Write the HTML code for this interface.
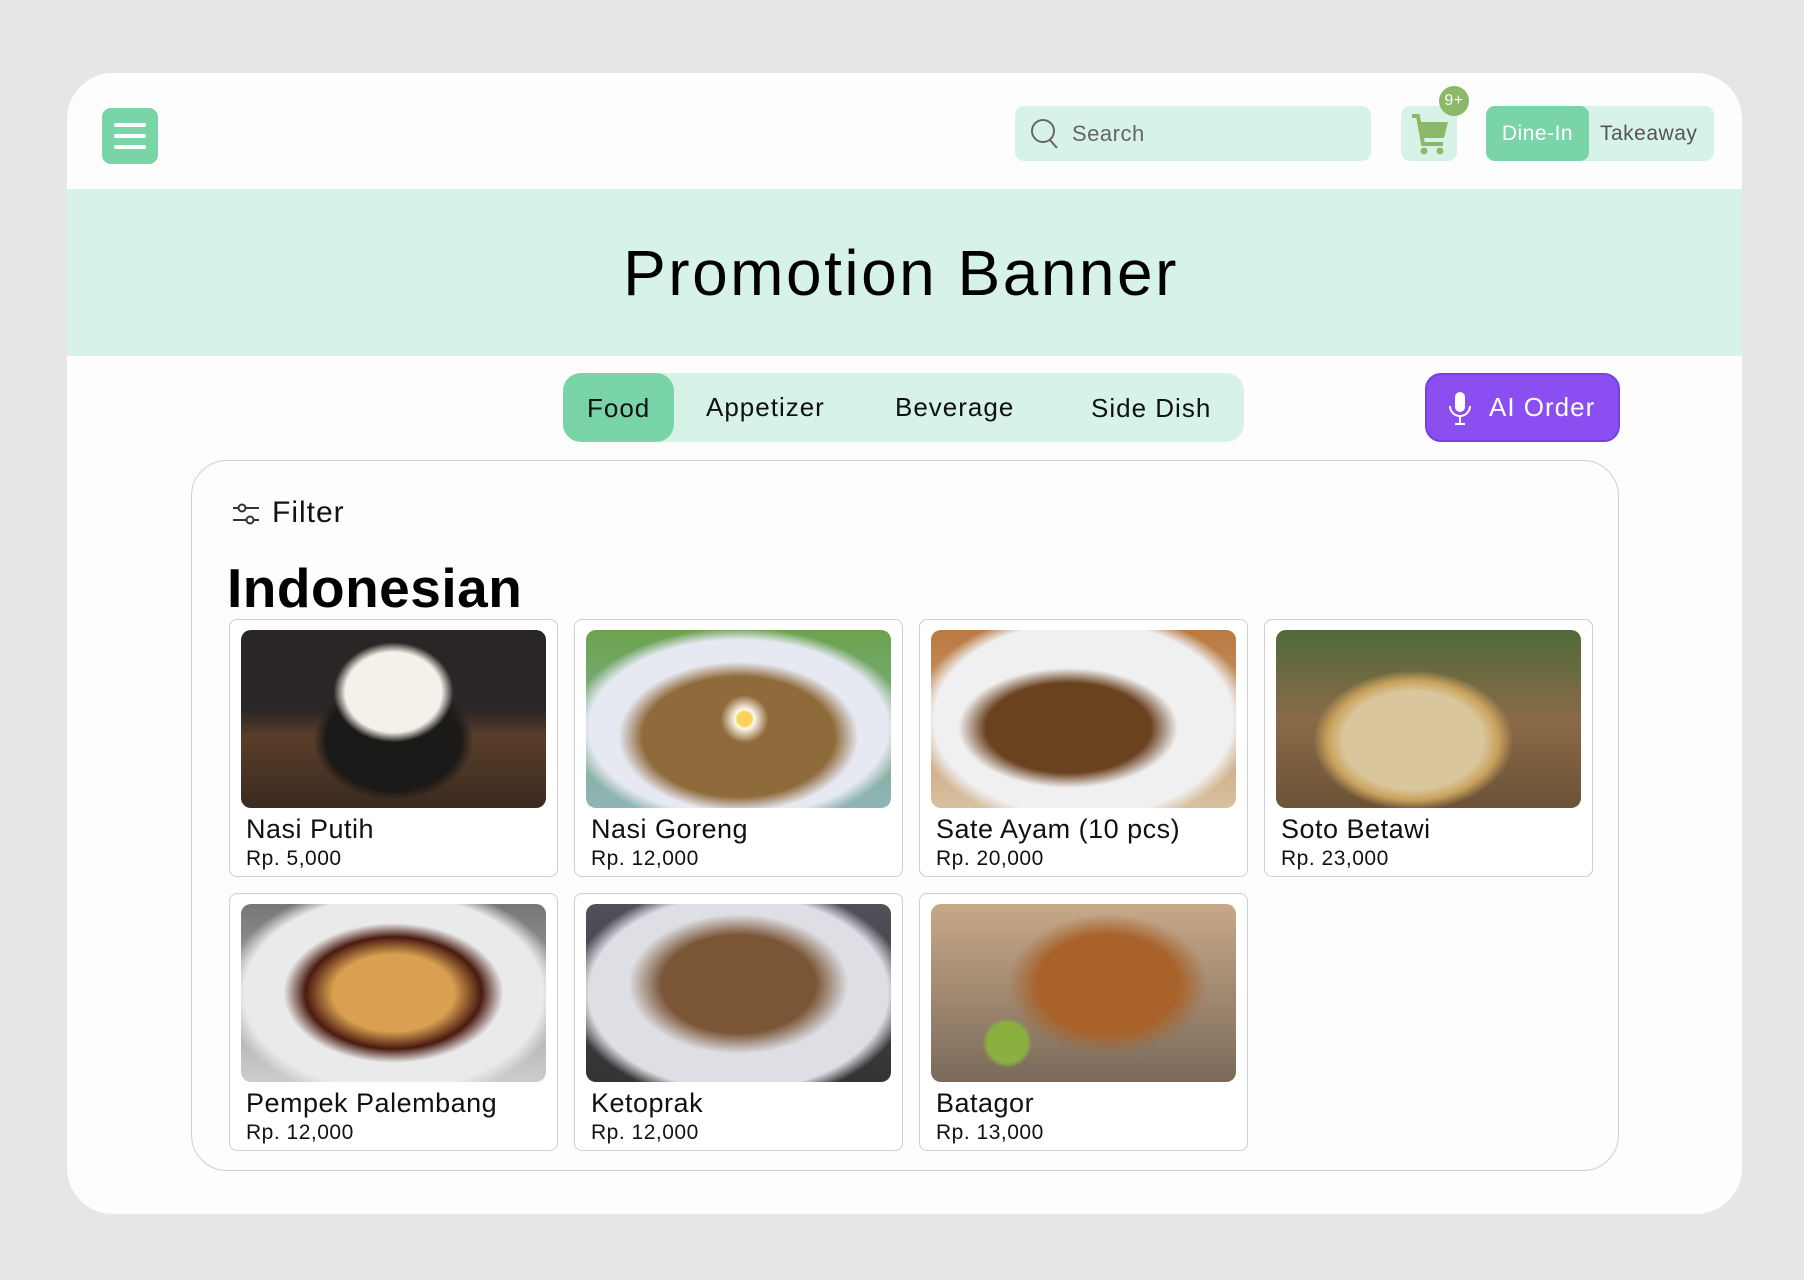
<!DOCTYPE html>
<html><head><meta charset="utf-8"><style>
*{box-sizing:border-box;margin:0;padding:0}
body{width:1804px;height:1280px;background:#e6e6e6;font-family:"Liberation Sans",sans-serif;position:relative;overflow:hidden;color:#111;letter-spacing:0.5px}
.a{position:absolute}
.card{left:67px;top:73px;width:1675px;height:1141px;background:#fdfdfd;border-radius:46px;overflow:hidden}
.mint{background:#d7f3e7}
.g{background:#79d5a8}
.item{position:absolute;width:329px;height:258px;border:1.5px solid #cfcfcf;border-radius:8px;background:#fff}
.item .img{position:absolute;left:11px;top:10px;width:305px;height:178px;border-radius:10px}
.item .n{position:absolute;left:16px;top:194px;font-size:27px}
.item .p{position:absolute;left:16px;top:227px;font-size:21px}
</style></head><body>
<div class="a card"></div>
<div class="a g" style="left:102px;top:108px;width:56px;height:56px;border-radius:9px"></div>
<div class="a" style="left:114px;top:123px;width:32px;height:4px;background:#fff;border-radius:2px"></div>
<div class="a" style="left:114px;top:134px;width:32px;height:4px;background:#fff;border-radius:2px"></div>
<div class="a" style="left:114px;top:145px;width:32px;height:4px;background:#fff;border-radius:2px"></div>
<div class="a mint" style="left:1015px;top:106px;width:356px;height:55px;border-radius:9px"></div>
<svg class="a" style="left:1029px;top:117px" width="32" height="34" viewBox="0 0 32 34"><circle cx="14" cy="14" r="11" fill="none" stroke="#666" stroke-width="2"/><path d="M21 23l7 8" stroke="#666" stroke-width="2"/></svg>
<div class="a" style="left:1072px;top:121px;font-size:22px;color:#666">Search</div>
<div class="a mint" style="left:1401px;top:106px;width:56px;height:55px;border-radius:9px"></div>
<svg class="a" style="left:1406px;top:112px" width="46" height="46" viewBox="0 0 46 46"><path d="M6 4h6l5 28h20" fill="none" stroke="#8bb96a" stroke-width="4"/><path d="M12 10h30l-4 16H15z" fill="#8bb96a"/><circle cx="18" cy="39" r="3.5" fill="#8bb96a"/><circle cx="34" cy="39" r="3.5" fill="#8bb96a"/></svg>
<div class="a" style="left:1439px;top:86px;width:30px;height:30px;border-radius:50%;background:#8bb96a;color:#fff;font-size:16px;text-align:center;line-height:30px">9+</div>
<div class="a mint" style="left:1486px;top:106px;width:228px;height:55px;border-radius:9px"></div>
<div class="a g" style="left:1486px;top:106px;width:103px;height:55px;border-radius:9px;color:#fff;font-size:21px;text-align:center;line-height:55px">Dine-In</div>
<div class="a" style="left:1600px;top:106px;font-size:21px;line-height:55px;color:#555">Takeaway</div>
<div class="a mint" style="left:67px;top:189px;width:1675px;height:167px"></div>
<div class="a" style="left:67px;top:236px;width:1668px;text-align:center;font-size:64px;color:#000;letter-spacing:2.5px">Promotion Banner</div>
<div class="a mint" style="left:563px;top:373px;width:681px;height:69px;border-radius:18px"></div>
<div class="a g" style="left:563px;top:373px;width:111px;height:69px;border-radius:18px"></div>
<div class="a" style="left:587px;top:393px;font-size:26px;letter-spacing:1px">Food</div>
<div class="a" style="left:706px;top:392px;font-size:26px;letter-spacing:1px">Appetizer</div>
<div class="a" style="left:895px;top:392px;font-size:26px;letter-spacing:1px">Beverage</div>
<div class="a" style="left:1091px;top:393px;font-size:26px;letter-spacing:1px">Side Dish</div>
<div class="a" style="left:1425px;top:373px;width:195px;height:69px;border-radius:16px;background:#8b4ef0;border:2px solid #7a3fe0"></div>
<svg class="a" style="left:1447px;top:391px" width="26" height="36" viewBox="0 0 26 36"><rect x="8" y="1" width="10" height="20" rx="5" fill="#fff"/><path d="M3 15a10 10 0 0 0 20 0M13 25v8M8 33h10" fill="none" stroke="#fff" stroke-width="2"/></svg>
<div class="a" style="left:1489px;top:392px;font-size:26px;color:#fff;letter-spacing:1px">AI Order</div>
<div class="a" style="left:191px;top:460px;width:1428px;height:711px;border:1.5px solid #cfcfcf;border-radius:36px"></div>
<svg class="a" style="left:231px;top:500px" width="30" height="28" viewBox="0 0 30 28"><path d="M2 8h26M2 20h26" stroke="#333" stroke-width="2"/><circle cx="11" cy="8" r="3.5" fill="#fff" stroke="#333" stroke-width="2"/><circle cx="19" cy="20" r="3.5" fill="#fff" stroke="#333" stroke-width="2"/></svg>
<div class="a" style="left:272px;top:496px;font-size:30px;letter-spacing:1px">Filter</div>
<div class="a" style="left:227px;top:556px;font-size:55px;font-weight:bold;color:#000">Indonesian</div>
<div class="item" style="left:229px;top:619px"><div class="img" style="background:radial-gradient(ellipse 60px 50px at 50% 35%,#f4f1ea 80%,transparent 100%),radial-gradient(ellipse 80px 60px at 50% 62%,#1c1a18 85%,transparent 100%),linear-gradient(#2a2626 45%,#5a3e2a 60%,#3a2a20)"></div><div class="n">Nasi Putih</div><div class="p">Rp. 5,000</div></div>
<div class="item" style="left:574px;top:619px"><div class="img" style="background:radial-gradient(circle 24px at 52% 50%,#fbd25a 30%,#fff8ec 40%,transparent 100%),radial-gradient(ellipse 120px 75px at 50% 60%,#8f6a3a 80%,transparent 100%),radial-gradient(ellipse 170px 100px at 50% 55%,#e6e8f2 88%,transparent 100%),linear-gradient(#6aa34e,#8fb5b8)"></div><div class="n">Nasi Goreng</div><div class="p">Rp. 12,000</div></div>
<div class="item" style="left:919px;top:619px"><div class="img" style="background:radial-gradient(ellipse 110px 60px at 45% 55%,#6b4220 75%,transparent 100%),radial-gradient(ellipse 170px 110px at 50% 50%,#f0f0f0 88%,transparent 100%),linear-gradient(#b97840,#d8c0a0)"></div><div class="n">Sate Ayam (10 pcs)</div><div class="p">Rp. 20,000</div></div>
<div class="item" style="left:1264px;top:619px"><div class="img" style="background:radial-gradient(ellipse 100px 70px at 45% 62%,#d9c69c 70%,#c9a35d 85%,transparent 100%),linear-gradient(#4f6a3a,#8a6a48 50%,#6c5236)"></div><div class="n">Soto Betawi</div><div class="p">Rp. 23,000</div></div>
<div class="item" style="left:229px;top:893px"><div class="img" style="background:radial-gradient(ellipse 110px 70px at 50% 50%,#d8a050 55%,#4a1a10 80%,transparent 100%),radial-gradient(ellipse 170px 110px at 50% 50%,#eaeaea 88%,transparent 100%),linear-gradient(#777,#ccc)"></div><div class="n">Pempek Palembang</div><div class="p">Rp. 12,000</div></div>
<div class="item" style="left:574px;top:893px"><div class="img" style="background:radial-gradient(ellipse 110px 70px at 50% 45%,#7a5536 70%,transparent 100%),radial-gradient(ellipse 170px 110px at 50% 50%,#dedfe5 88%,transparent 100%),linear-gradient(#50505a,#333)"></div><div class="n">Ketoprak</div><div class="p">Rp. 12,000</div></div>
<div class="item" style="left:919px;top:893px"><div class="img" style="background:radial-gradient(ellipse 100px 70px at 58% 45%,#a8622a 70%,transparent 100%),radial-gradient(circle 25px at 25% 78%,#8ab040 80%,transparent 100%),linear-gradient(#c8a888,#7a6a5a)"></div><div class="n">Batagor</div><div class="p">Rp. 13,000</div></div>
</body></html>
